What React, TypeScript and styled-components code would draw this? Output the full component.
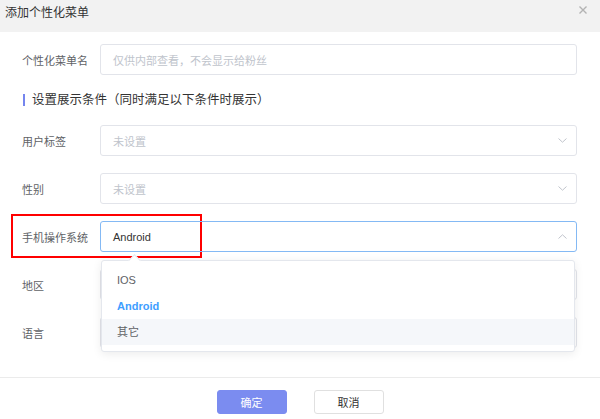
import React from "react";
import styled, {createGlobalStyle} from "styled-components";

const Global = createGlobalStyle`
  html, body {
    margin: 0;
    padding: 0;
    background: #fff;
  }
  body {
    font-family: "Liberation Sans", "Noto Sans CJK SC", sans-serif;
    -webkit-font-smoothing: antialiased;
  }
`

const Dialog = styled.div`
  width: 600px;
  height: 419px;
  display: flex;
  flex-direction: column;
  background: #fff;
  overflow: hidden;
`

const Header = styled.div`
  height: 32px;
  flex: none;
  background: #f2f2f2;
  display: flex;
  justify-content: space-between;
  align-items: flex-start;
  padding: 5px 13px 0 5px;
  box-sizing: border-box;
`

const Title = styled.div`
  font-size: 12px;
  line-height: 16px;
  color: #333;
`

const Close = styled.button`
  border: 0;
  background: none;
  padding: 0;
  margin-top: 1px;
  width: 8px;
  height: 8px;
  display: flex;
  cursor: pointer;
`

const Body = styled.div`
  flex: 1;
  padding: 12px 23px 0 22px;
  display: flex;
  flex-direction: column;
`

const Row = styled.div<{ $gap?: number }>`
  position: relative;
  display: flex;
  align-items: center;
  height: 31px;
  margin-top: ${p => p.$gap ?? 17}px;
`

const Label = styled.div`
  width: 78px;
  flex: none;
  font-size: 11px;
  color: #606266;
`

const Field = styled.div<{ $focused?: boolean }>`
  position: relative;
  flex: 1;
  height: 100%;
  box-sizing: border-box;
  border: 1px solid ${p => p.$focused ? "#84b9f4" : "#e2e4ea"};
  border-radius: 3px;
  display: flex;
  align-items: center;
  justify-content: space-between;
  padding: 0 9px 0 12px;
  font-size: 11px;
  color: #333;
`

const Placeholder = styled.span`
  color: #c0c4cc;
`

const Section = styled.div`
  margin-top: 17px;
  display: flex;
  align-items: center;
  gap: 7px;
  font-size: 12.5px;
  line-height: 16px;
  color: #333;
  padding-left: 1px;

  &::before {
    content: "";
    width: 2px;
    height: 12px;
    background: #7585ee;
  }
`

const Highlight = styled.div`
  position: absolute;
  left: -11px;
  top: -7px;
  width: 191px;
  height: 44px;
  box-sizing: border-box;
  border: 2px solid #f00;
  pointer-events: none;
`

const Menu = styled.ul`
  position: absolute;
  z-index: 2;
  top: calc(100% + 9px);
  left: 0;
  right: 1px;
  margin: 0;
  padding: 6px 0;
  list-style: none;
  background: #fff;
  border: 1px solid #e4e7ed;
  border-radius: 3px;
  box-shadow: 0 2px 10px rgba(0, 0, 0, 0.08);

  &::before {
    content: "";
    position: absolute;
    top: -5px;
    left: 28px;
    width: 8px;
    height: 8px;
    background: #fff;
    border-left: 1px solid #e4e7ed;
    border-top: 1px solid #e4e7ed;
    transform: rotate(45deg);
  }
`

const Option = styled.li<{ $selected?: boolean; $hover?: boolean }>`
  height: 26px;
  line-height: 26px;
  padding-left: 15px;
  font-size: 11px;
  color: ${p => p.$selected ? "#409eff" : "#606266"};
  font-weight: ${p => p.$selected ? 700 : 400};
  background: ${p => p.$hover ? "#f5f7fa" : "transparent"};
`

const Footer = styled.div`
  height: 42px;
  flex: none;
  border-top: 1px solid #ebebeb;
  box-sizing: border-box;
  display: flex;
  justify-content: center;
  align-items: flex-start;
  gap: 27px;
  padding-top: 12px;
`

const Button = styled.button<{ $primary?: boolean }>`
  width: 70px;
  height: 24px;
  border-radius: 3px;
  font-family: inherit;
  font-size: 11px;
  cursor: pointer;
  border: 1px solid ${p => p.$primary ? "#7b8cf0" : "#e0e0e0"};
  background: ${p => p.$primary ? "#7b8cf0" : "#fff"};
  color: ${p => p.$primary ? "#fff" : "#333"};
`

const Chevron: React.FC<{ up?: boolean }> = ({up}) => (
    <svg width="9" height="5" viewBox="0 0 9 5">
        <path d={up ? "M0.5 4.5 L4.5 0.8 L8.5 4.5" : "M0.5 0.5 L4.5 4.2 L8.5 0.5"}
              fill="none" stroke="#c0c4cc" strokeWidth="1"/>
    </svg>
)

const options = ["IOS", "Android", "其它"]

const App: React.FC = () => {
    return <>
        <Global/>
        <Dialog>
            <Header>
                <Title>添加个性化菜单</Title>
                <Close aria-label="close">
                    <svg width="8" height="8" viewBox="0 0 8 8">
                        <path d="M0.5 0.5 L7.5 7.5 M7.5 0.5 L0.5 7.5" stroke="#b3b3b3" strokeWidth="1.4"/>
                    </svg>
                </Close>
            </Header>

            <Body>
                <Row $gap={0}>
                    <Label>个性化菜单名</Label>
                    <Field><Placeholder>仅供内部查看，不会显示给粉丝</Placeholder></Field>
                </Row>

                <Section>设置展示条件（同时满足以下条件时展示）</Section>

                <Row>
                    <Label>用户标签</Label>
                    <Field><Placeholder>未设置</Placeholder><Chevron/></Field>
                </Row>

                <Row>
                    <Label>性别</Label>
                    <Field><Placeholder>未设置</Placeholder><Chevron/></Field>
                </Row>

                <Row>
                    <Highlight/>
                    <Label>手机操作系统</Label>
                    <Field $focused>
                        <span>Android</span>
                        <Chevron up/>
                        <Menu>
                            {options.map(o =>
                                <Option key={o} $selected={o === "Android"} $hover={o === "其它"}>{o}</Option>)}
                        </Menu>
                    </Field>
                </Row>

                {/* these two selects sit under the open menu */}
                <Row>
                    <Label>地区</Label>
                    <Field/>
                </Row>

                <Row>
                    <Label>语言</Label>
                    <Field/>
                </Row>
            </Body>

            <Footer>
                <Button $primary>确定</Button>
                <Button>取消</Button>
            </Footer>
        </Dialog>
    </>
}

export default App;
